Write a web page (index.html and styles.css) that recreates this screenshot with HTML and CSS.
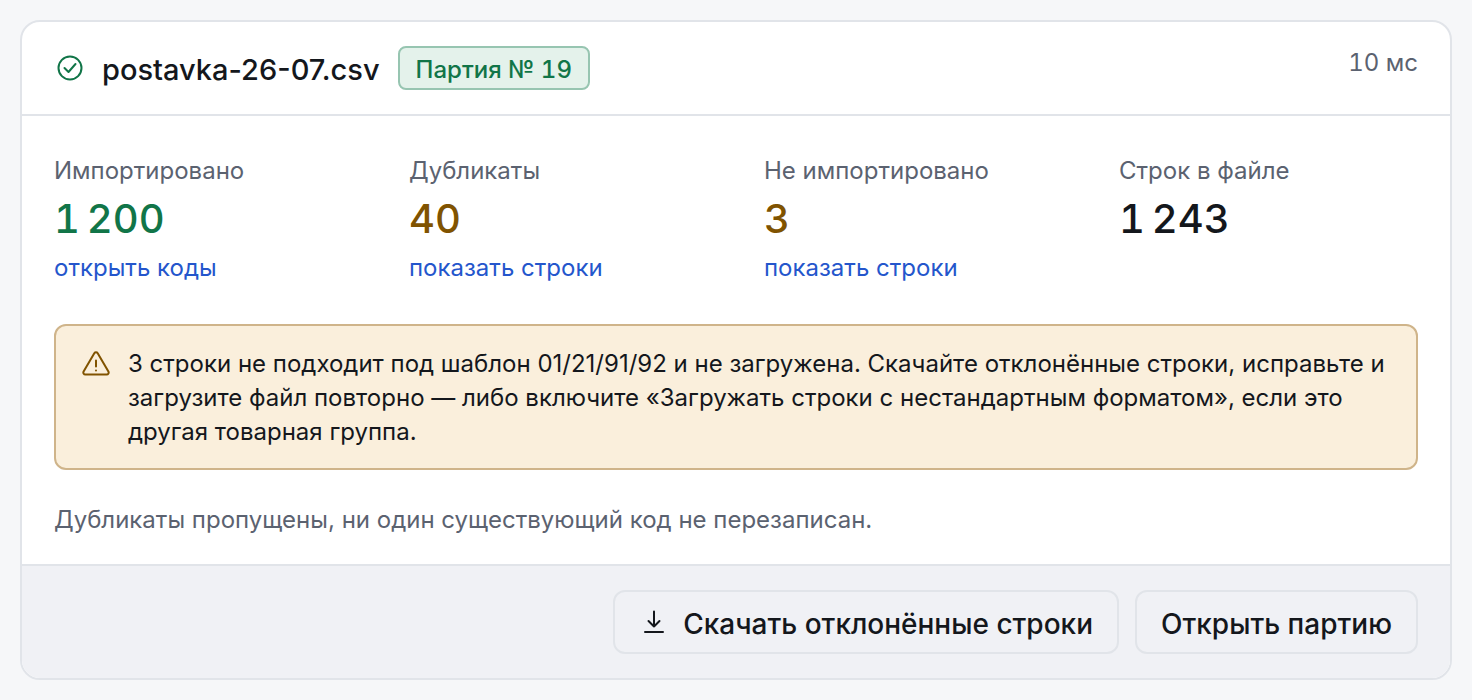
FILE: index.html
```html
<!DOCTYPE html>
<html lang="ru">
<head>
<meta charset="UTF-8" />
<meta name="viewport" content="width=device-width, initial-scale=1" />
<title>Импорт кодов</title>
<link rel="stylesheet" href="styles.css">
</head>
<body>

<main class="card">
  <header class="card-header">
    <svg class="icon-ok" viewBox="0 0 28 28" aria-hidden="true">
      <circle cx="14" cy="14" r="11.500" />
      <path d="M8.500 14l4 4 7-8" />
    </svg>
    <h1 class="file-name">postavka-26-07.csv</h1>
    <span class="badge">Партия № 19</span>
    <span class="duration">10 мс</span>
  </header>

  <div class="card-body">
    <section class="stats">
      <div class="stat">
        <span class="stat-label">Импортировано</span>
        <span class="stat-value ok">1&#8239;200</span>
        <a class="stat-link" href="#codes">открыть коды</a>
      </div>
      <div class="stat">
        <span class="stat-label">Дубликаты</span>
        <span class="stat-value warn">40</span>
        <a class="stat-link" href="#duplicates">показать строки</a>
      </div>
      <div class="stat">
        <span class="stat-label">Не импортировано</span>
        <span class="stat-value warn">3</span>
        <a class="stat-link" href="#rejected">показать строки</a>
      </div>
      <div class="stat">
        <span class="stat-label">Строк в файле</span>
        <span class="stat-value">1&#8239;243</span>
      </div>
    </section>

    <div class="alert">
      <svg class="icon-warn" viewBox="0 0 28 28" aria-hidden="true">
        <path d="M12.300 3.200L1.600 21.600a2 2 0 0 0 1.700 3h21.400a2 2 0 0 0 1.700-3L15.700 3.200a2 2 0 0 0-3.400 0z" />
        <path d="M14 10.500v6M14 20.500v.1" />
      </svg>
      <p class="alert-text">3 строки не подходит под шаблон 01/21/91/92 и не загружена. Скачайте отклонённые строки, исправьте и загрузите файл повторно — либо включите «Загружать строки с нестандартным форматом», если это другая товарная группа.</p>
    </div>

    <p class="note">Дубликаты пропущены, ни один существующий код не перезаписан.</p>
  </div>

  <footer class="card-footer">
    <button class="button" type="button">
      <svg class="icon-download" viewBox="0 0 28 28" aria-hidden="true">
        <path d="M15 1.500v15M9.500 11l5.500 5.500 5.500-5.500M6 22h18" />
      </svg>
      Скачать отклонённые строки
    </button>
    <button class="button" type="button">Открыть партию</button>
  </footer>
</main>

</body>
</html>
```

FILE: styles.css
```css
* {
  box-sizing: border-box;
}
body {
  margin: 0;
  padding: 20px;
  background: #f6f7f9;
  color: #14171c;
  font-family: Inter, "Noto Sans", sans-serif;
  font-size: 24px;
  line-height: 34px;
}
h1, p {
  margin: 0;
}
svg {
  flex: none;
  fill: none;
  stroke: currentColor;
  stroke-width: 2;
  stroke-linecap: round;
  stroke-linejoin: round;
}
.card {
  background: #fff;
  border: 2px solid #e1e4e9;
  border-radius: 20px;
  overflow: hidden;
}
.card-header {
  display: flex;
  align-items: center;
  padding: 24px 32px;
  border-bottom: 2px solid #e1e4e9;
}
.icon-ok {
  width: 28px;
  height: 28px;
  margin: 0 18px 0 2px;
  color: #117548;
}
.file-name {
  margin-right: 18px;
  padding-top: 4px;
  font-size: 29px;
  font-weight: 500;
}
.badge {
  padding: 4px 16px 0;
  border: 2px solid #97c5b1;
  border-radius: 8px;
  background: #e4f2eb;
  color: #117548;
  font-weight: 500;
  line-height: 36px;
}
.badge,
.duration,
.stat-value {
  font-variant-numeric: tabular-nums;
}
.duration {
  align-self: flex-start;
  margin-left: auto;
  color: #5b6270;
}
.card-body {
  padding: 38px 32px 27px;
}
.stats {
  display: grid;
  grid-template-columns: repeat(4, 1fr);
  gap: 56px;
  margin-bottom: 38px;
}
.stat {
  display: flex;
  flex-direction: column;
  align-items: flex-start;
}
.stat-label,
.note {
  color: #5b6270;
}
.stat-value {
  margin: 7px 0 8px;
  font-size: 40px;
  font-weight: 500;
  line-height: 48px;
}
.stat-value.ok {
  color: #117548;
}
.stat-value.warn {
  color: #805300;
}
.stat-link {
  color: #2456cc;
  text-decoration: none;
}
.stat-link:hover {
  text-decoration: underline;
}
.alert {
  display: flex;
  gap: 18px;
  margin: 39px 0 33px;
  padding: 21px 26px 19px;
  border: 2px solid #cfb48a;
  border-radius: 12px;
  background: #faefdc;
}
.icon-warn {
  width: 28px;
  height: 28px;
  margin-top: 3px;
  color: #805300;
}
.card-footer {
  display: flex;
  flex-wrap: wrap;
  justify-content: flex-end;
  gap: 16px;
  padding: 24px 32px;
  border-top: 2px solid #e1e4e9;
  background: #f0f1f5;
}
.button {
  display: flex;
  align-items: center;
  gap: 16px;
  padding: 14px 24px 10px;
  border: 2px solid #e1e4e9;
  border-radius: 12px;
  background: #f0f1f5;
  color: inherit;
  font: inherit;
  font-size: 28px;
  font-weight: 500;
  line-height: 36px;
  cursor: pointer;
}
.icon-download {
  width: 28px;
  height: 28px;
}
```
